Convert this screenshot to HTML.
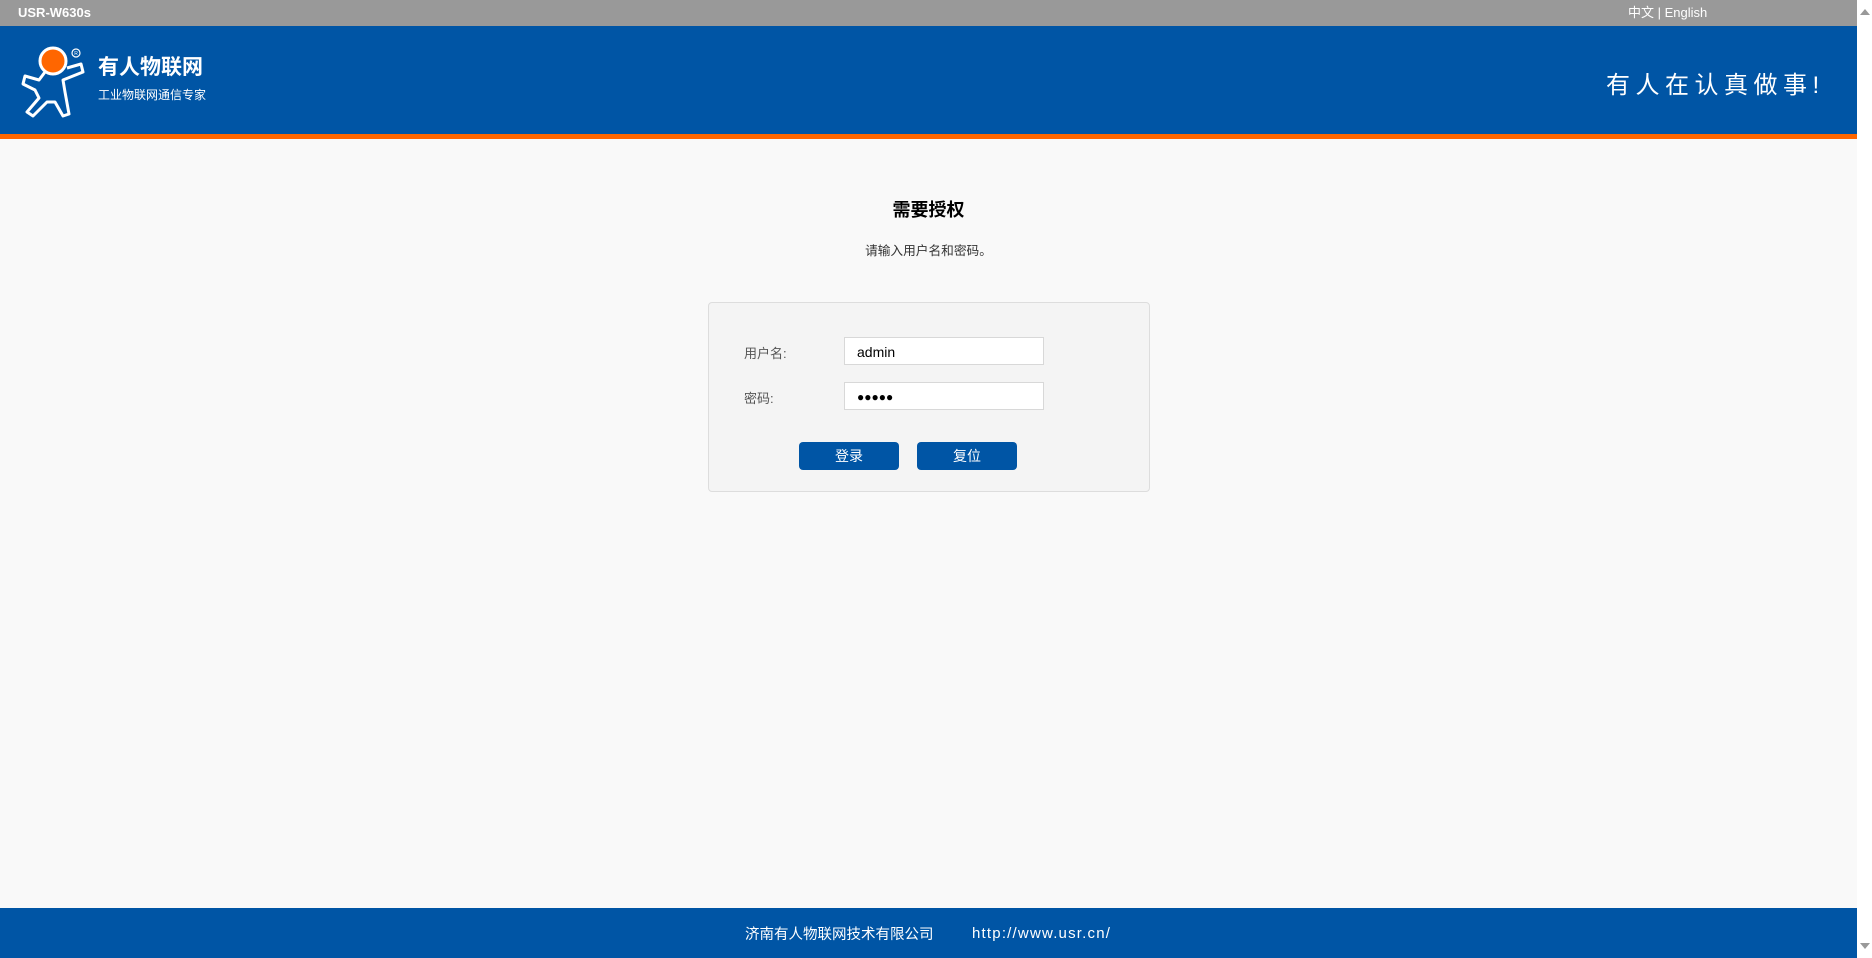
<!DOCTYPE html>
<html><head><meta charset="utf-8"><style>
*{margin:0;padding:0;box-sizing:border-box}
body{width:1872px;height:958px;overflow:hidden;background:#f9f9f9;font-family:"Liberation Sans","Noto Sans CJK SC",sans-serif;position:relative}
.top{position:absolute;left:0;top:0;width:1857px;height:26px;background:#999;color:#fff}
.top .m{position:absolute;left:18px;top:5px;font-size:13px;font-weight:bold}
.top .l{position:absolute;left:1628px;top:2px;font-size:13px}
.hd{position:absolute;left:0;top:26px;width:1857px;height:108px;background:#0055a5}
.or{position:absolute;left:0;top:134px;width:1857px;height:5px;background:#f60}
.t1{position:absolute;left:98px;top:51px;color:#fff;font-size:21px;font-weight:bold}
.t2{position:absolute;left:98px;top:86px;color:#fff;font-size:12px}
.sl{position:absolute;left:1606px;top:65px;color:#fff;font-size:24px;letter-spacing:5.5px}
.sb{position:absolute;left:1857px;top:0;width:15px;height:958px;background:#fff}
h1{position:absolute;left:0;width:1857px;top:196px;text-align:center;font-size:18px;color:#000}
.sub{position:absolute;left:0;width:1857px;top:240px;text-align:center;font-size:12.7px;color:#333}
.box{position:absolute;left:708px;top:302px;width:442px;height:190px;background:#f4f4f4;border:1px solid #ddd;border-radius:4px}
.lb{position:absolute;left:744px;font-size:13px;color:#555}
.in{position:absolute;left:844px;width:200px;height:28px;background:#fff;border:1px solid #d8d8d8;font-size:14px;padding:6px 0 0 12px;color:#000}
.bt{position:absolute;top:442px;width:100px;height:28px;background:#0055a5;color:#fff;border-radius:4px;text-align:center;font-size:14px;line-height:28px}
.ft{position:absolute;left:0;top:908px;width:1857px;height:50px;background:#0055a5;color:#fff}
</style></head><body>
<div class="top"><span class="m">USR-W630s</span><span class="l">中文 | English</span></div>
<div class="hd"></div><div class="or"></div>
<svg style="position:absolute;left:15px;top:40px" width="75" height="80" viewBox="0 0 75 80">
<path d="M30 32 L24 40 L10 36 L8 44 L20 50 L24 58 L12 72 L18 76 L32 62 L40 62 L48 76 L54 74 L50 52 L48 40 L58 36 L68 32 L66 24 L52 28" fill="none" stroke="#fff" stroke-width="3" stroke-linejoin="round"/>
<circle cx="38" cy="21" r="13" fill="#f60" stroke="#fff" stroke-width="3"/>
<circle cx="61" cy="13" r="4" fill="none" stroke="#fff" stroke-width="1.2"/>
<text x="59.3" y="15" font-size="5" fill="#fff" font-family="Liberation Sans">R</text>
</svg>
<div class="t1">有人物联网</div><div class="t2">工业物联网通信专家</div>
<div class="sl">有人在认真做事!</div>
<h1>需要授权</h1>
<div class="sub">请输入用户名和密码。</div>
<div class="box"></div>
<div class="lb" style="top:343px">用户名:</div>
<div class="in" style="top:337px">admin</div>
<div class="lb" style="top:388px">密码:</div>
<div class="in" style="top:382px;font-size:12px;padding-top:7px">●●●●●</div>
<div class="bt" style="left:799px">登录</div>
<div class="bt" style="left:917px">复位</div>
<div class="ft"><span style="position:absolute;left:745px;top:15px;font-size:14.5px">济南有人物联网技术有限公司</span><span style="position:absolute;left:972px;top:17px;font-size:15px;letter-spacing:1.2px">http://www.usr.cn/</span></div>
<div class="sb"><div style="position:absolute;left:3px;top:9px;border:5px solid transparent;border-bottom:6px solid #999;border-top:0"></div><div style="position:absolute;left:3px;top:943px;border:5px solid transparent;border-top:6px solid #999;border-bottom:0"></div></div>
</body></html>
